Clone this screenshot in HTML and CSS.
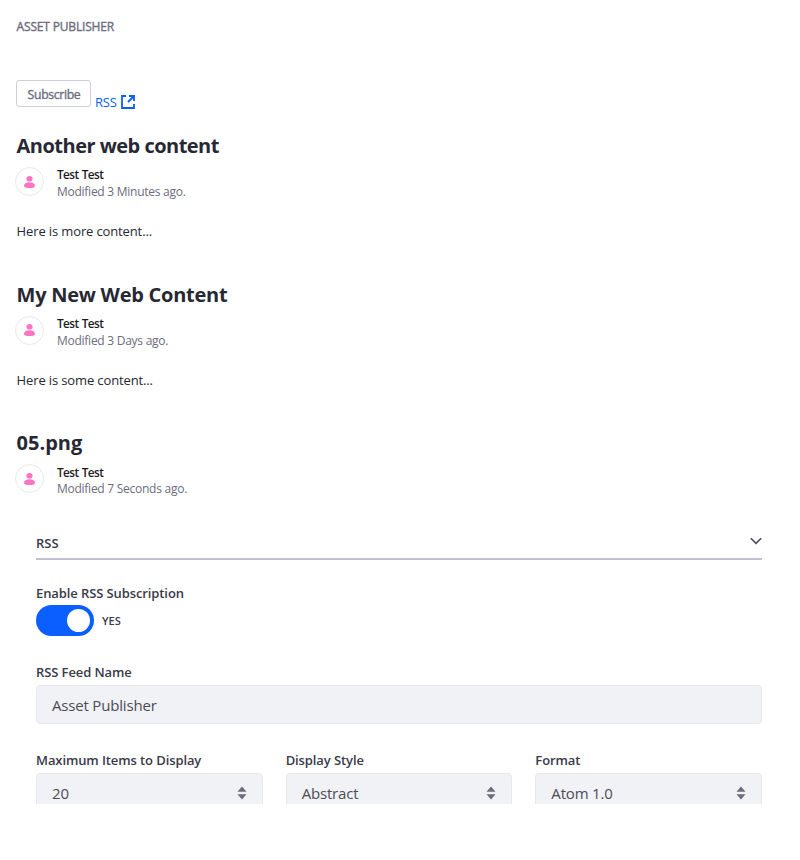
FILE: index.html
```html
<!DOCTYPE html>
<html lang="en">
<head>
<meta charset="utf-8">
<title>Asset Publisher</title>
<link rel="stylesheet" href="styles.css">
</head>
<body>
<svg width="0" height="0" class="defs">
  <symbol id="user" viewBox="0 0 10 12"><circle cx="5" cy="2.8" r="2.8"/><path d="M0 10C0 7.6 2 6.3 5 6.3S10 7.6 10 10C10 11.5 8 12 5 12S0 11.5 0 10Z"/></symbol>
  <symbol id="sort" viewBox="0 0 10 14"><path d="M.5 5.7L5 .5L9.500 5.700Z M.5 8.300L5 13.500L9.500 8.300Z"/></symbol>
</svg>
<main class="page">
  <h1 class="portlet-title">ASSET PUBLISHER</h1>
  <div class="toolbar">
    <button class="subscribe">Subscribe</button>
    <a class="rss-link"><span>RSS</span><svg width="14" height="14" viewBox="0 0 14 14"><path d="M5 1H1V13H13V9"/><path d="M8 1H13V6M13 1L7 7"/></svg></a>
  </div>
  <article class="asset">
    <h2><span class="t1">Another web content</span></h2>
    <div class="author"><span class="avatar"><svg width="11" height="12" viewBox="0 0 10 12" preserveAspectRatio="none"><use href="#user" width="10" height="12"/></svg></span>
      <div><div class="name">Test Test</div><div class="date">Modified 3 Minutes ago.</div></div></div>
    <p>Here is more content...</p>
  </article>
  <article class="asset">
    <h2><span class="t2">My New Web Content</span></h2>
    <div class="author"><span class="avatar"><svg width="11" height="12" viewBox="0 0 10 12" preserveAspectRatio="none"><use href="#user" width="10" height="12"/></svg></span>
      <div><div class="name">Test Test</div><div class="date">Modified 3 Days ago.</div></div></div>
    <p>Here is some content...</p>
  </article>
  <article class="asset last">
    <h2><span>05.png</span></h2>
    <div class="author"><span class="avatar"><svg width="11" height="12" viewBox="0 0 10 12" preserveAspectRatio="none"><use href="#user" width="10" height="12"/></svg></span>
      <div><div class="name">Test Test</div><div class="date">Modified 7 Seconds ago.</div></div></div>
  </article>
  <section class="panel">
    <header class="panel-head"><span>RSS</span><svg width="12" height="8" viewBox="0 0 12 8"><path d="M.8 1.200L6 6.400L11.200 1.200"/></svg></header>
    <div class="label enable">Enable RSS Subscription</div>
    <div class="toggle"><span class="track"><span class="knob"></span></span><span class="yes">YES</span></div>
    <div class="label feed">RSS Feed Name</div>
    <div class="field">Asset Publisher</div>
    <div class="columns">
      <div><div class="label">Maximum Items to Display</div><div class="field select"><span>20</span><svg width="10" height="14"><use href="#sort"/></svg></div></div>
      <div><div class="label">Display Style</div><div class="field select"><span>Abstract</span><svg width="10" height="14"><use href="#sort"/></svg></div></div>
      <div><div class="label">Format</div><div class="field select"><span>Atom 1.0</span><svg width="10" height="14"><use href="#sort"/></svg></div></div>
    </div>
  </section>
</main>
</body>
</html>
```
FILE: styles.css
```css
* { box-sizing: border-box; }
body { margin: 0; background: #fff; color: #272833; font: 13px/20px "Open Sans", "Noto Sans", sans-serif; }
.defs { display: block; height: 0; }
h1, h2, p { margin: 0; }
.page { height: 804px; overflow: hidden; padding: 17px 38px 0 16px; white-space: nowrap; }
.portlet-title { font-size: 12px; font-weight: 500; color: #6b6c7e; height: 20px; line-height: 20px; letter-spacing: -.17px; padding-left: .6px; -webkit-text-stroke: .35px #6b6c7e; }
.toolbar { display: flex; padding-top: 43px; height: 97px; }
.subscribe { width: 75px; height: 27px; padding: 1px 0 0 1px; border: 1px solid #cdced9; border-radius: 3px; background: #fff; color: #6b6c7e; font: 500 12.250px/25px "Open Sans", sans-serif; letter-spacing: -.35px; -webkit-text-stroke: .35px #6b6c7e; }
.rss-link { display: flex; align-items: center; gap: 4px; margin: 12px 0 0 4px; height: 20px; color: #0b5fff; letter-spacing: -.2px; }
.rss-link svg { fill: none; stroke: #0b5fff; stroke-width: 1.8; }
.asset { height: 148.600px; }
.asset.last { height: 96px; }
.asset h2 { font-size: 20px; line-height: 24px; font-weight: 700; height: 33px; padding-left: .6px; }
.t1 { letter-spacing: -.52px; }
.t2 { letter-spacing: -.26px; }
.author { display: flex; height: 36px; }
.avatar { display: grid; place-items: center; width: 29px; height: 29px; margin: 0 13px 0 -1px; border: 1px solid #e7e7ed; border-radius: 50%; }
.avatar svg { fill: #ff73c3; }
.name { font-size: 11.800px; font-weight: 600; line-height: 18px; height: 17.500px; margin-top: -1.600px; color: #1c1c24; letter-spacing: -.6px; word-spacing: .8px; }
.date { font-size: 12px; line-height: 18px; color: #6b6c7e; letter-spacing: -.26px; }
.asset p { line-height: 20px; margin-top: 18px; padding-left: .6px; letter-spacing: -.13px; }
.panel { margin: 0 0 0 20px; padding-top: 5px; width: 726px; color: #393a4a; }
.panel-head { display: flex; justify-content: space-between; height: 28px; border-bottom: 2px solid #c0c0d0; font-weight: 600; line-height: 22px; }
.panel-head svg { margin-top: 5px; fill: none; stroke: #4b4c5b; stroke-width: 1.600; }
.label { font-size: 13px; font-weight: 600; line-height: 20px; height: 20px; letter-spacing: -.1px; }
.enable { margin-top: 23px; }
.toggle { display: flex; align-items: center; gap: 8px; margin-top: 2px; height: 31px; }
.track { width: 58px; height: 31px; border-radius: 16px; background: #0b5fff; padding: 4px 4px 0 31px; }
.knob { display: block; width: 23px; height: 23px; border-radius: 50%; background: #fff; }
.yes { font-size: 11px; font-weight: 600; }
.feed { margin-top: 26px; }
.field { height: 39px; margin-top: 3px; padding: 0 15px; border: 1px solid #e7e7ed; border-radius: 4px; background: #f1f2f5; font-size: 15px; line-height: 38px; color: #4b4c58; letter-spacing: -.18px; }
.columns { display: grid; grid-template-columns: repeat(3, 1fr); gap: 23px; margin-top: 26px; }
.select { display: flex; justify-content: space-between; }
.select svg { margin-top: 12px; fill: #6b6c7e; }
```
